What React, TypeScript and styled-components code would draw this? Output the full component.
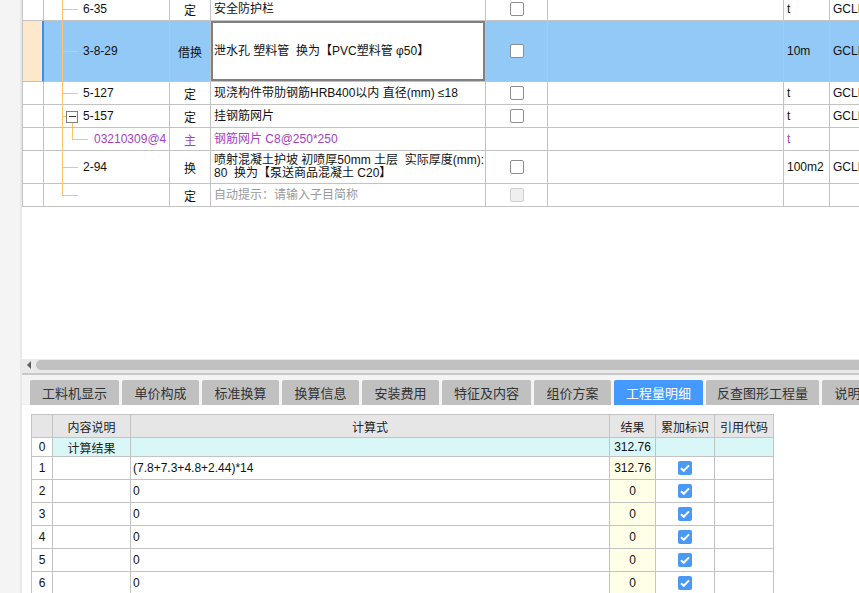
import React from "react";
import styled, { createGlobalStyle } from "styled-components";

const LINE = "#c3c3c3";
const TREE = "#ffc266";

const GlobalStyle = createGlobalStyle`
  *, *::before, *::after { box-sizing: border-box; }
  html, body { margin: 0; padding: 0; background: #fff; overflow: hidden; }
  body {
    font-family: "Liberation Sans", "Noto Sans CJK SC", sans-serif;
    font-size: 12px;
    color: #111;
  }
`;

const Page = styled.div`
  display: flex;
  width: 859px;
  height: 593px;
  overflow: hidden;
`;

const SideStrip = styled.div`
  flex: none;
  width: 22px;
  background: #f4f4f4;
  border-right: 2px solid #e8e8e8;
`;

const Main = styled.div`
  flex: 1;
  min-width: 0;
  display: flex;
  flex-direction: column;
  overflow: hidden;
`;

/* ---------- upper grid ---------- */

const TopArea = styled.div`
  flex: none;
  height: 359px;
  overflow: hidden;
  background: #fff;
`;

const Grid = styled.div`
  margin-top: -2px;
  width: max-content;
  border-left: 1px solid ${LINE};
`;

const Row = styled.div<{ $h: number; $sel?: boolean }>`
  display: grid;
  grid-template-columns: 21px 126px 41px 275px 62px 236px 46px 90px;
  height: ${(p) => p.$h}px;
  background: ${(p) => (p.$sel ? "#92c9f6" : "#fff")};
`;

type Tone = "normal" | "material" | "hint";
const toneColor = (t?: Tone) =>
  t === "material" ? "#a53fbf" : t === "hint" ? "#9a9a9a" : "#111";

const Cell = styled.div<{ $tone?: Tone }>`
  display: flex;
  align-items: center;
  overflow: hidden;
  white-space: pre;
  border-right: 1px solid ${LINE};
  border-bottom: 1px solid ${LINE};
  padding: 0 3px;
  color: ${(p) => toneColor(p.$tone)};
`;

const HeadCell = styled(Cell)<{ $sel?: boolean }>`
  background: ${(p) => (p.$sel ? "#fde8cb" : "#fff")};
  border-right: ${(p) => (p.$sel ? "2px solid #3c8ef0" : `1px solid ${LINE}`)};
`;

const CodeCell = styled(Cell)`
  padding: 0;
  align-items: stretch;
`;

const CodeText = styled.span`
  align-self: center;
`;

const TypeCell = styled(Cell)`
  justify-content: center;
  font-family: "Noto Sans CJK SC", sans-serif;
  font-weight: 400;
`;

const NameCell = styled(Cell)<{ $sel?: boolean }>`
  line-height: 13px;
  background: ${(p) => (p.$sel ? "#fff" : "transparent")};
  box-shadow: ${(p) => (p.$sel ? "inset 0 0 0 2px #808080" : "none")};
`;

const CenterCell = styled(Cell)`
  justify-content: center;
`;

const Box = styled.span<{ $disabled?: boolean }>`
  width: 14px;
  height: 14px;
  border-radius: 2px;
  border: 1px solid ${(p) => (p.$disabled ? "#cfcfcf" : "#8e8e8e")};
  background: ${(p) => (p.$disabled ? "#efefef" : "#fff")};
`;

const Guide = styled.svg`
  flex: none;
  display: block;
  shape-rendering: crispEdges;
`;

type TreeKind = "branch" | "last" | "open" | "child";

function TreeGuide({ kind, h }: { kind: TreeKind; h: number }) {
  const mid = Math.floor(h / 2) + 0.5;
  const w = kind === "child" ? 50 : 39;
  return (
    <Guide width={w} height={h}>
      <line x1={18.5} y1={0} x2={18.5} y2={kind === "last" ? mid : h} stroke={TREE} />
      {(kind === "branch" || kind === "last") && (
        <line x1={18.5} y1={mid} x2={34} y2={mid} stroke={TREE} />
      )}
      {kind === "open" && (
        <>
          <line x1={18.5} y1={mid} x2={22} y2={mid} stroke={TREE} />
          <line x1={28.5} y1={mid + 5.5} x2={28.5} y2={h} stroke={TREE} />
          <rect x={22.5} y={mid - 5.5} width={11} height={11} fill="#fff" stroke="#7f7f7f" />
          <line x1={25} y1={mid} x2={32} y2={mid} stroke="#333" />
        </>
      )}
      {kind === "child" && (
        <>
          <line x1={28.5} y1={0} x2={28.5} y2={mid} stroke={TREE} />
          <line x1={28.5} y1={mid} x2={44} y2={mid} stroke={TREE} />
        </>
      )}
    </Guide>
  );
}

type Item = {
  h: number;
  code: string;
  type: string;
  name: string;
  unit: string;
  cat: string;
  tree: TreeKind;
  check: "on" | "none" | "disabled";
  tone?: Tone;
  sel?: boolean;
};

const items: Item[] = [
  { h: 23, code: "6-35", type: "定", name: "安全防护栏", unit: "t", cat: "GCLMXHJ", tree: "branch", check: "on" },
  { h: 61, code: "3-8-29", type: "借换", name: "泄水孔 塑料管  换为【PVC塑料管 φ50】", unit: "10m", cat: "GCLMXHJ", tree: "branch", check: "on", sel: true },
  { h: 23, code: "5-127", type: "定", name: "现浇构件带肋钢筋HRB400以内 直径(mm) ≤18", unit: "t", cat: "GCLMXHJ", tree: "branch", check: "on" },
  { h: 23, code: "5-157", type: "定", name: "挂钢筋网片", unit: "t", cat: "GCLMXHJ", tree: "open", check: "on" },
  { h: 23, code: "03210309@4", type: "主", name: "钢筋网片 C8@250*250", unit: "t", cat: "", tree: "child", check: "none", tone: "material" },
  { h: 33, code: "2-94", type: "换", name: "喷射混凝土护坡 初喷厚50mm 土层  实际厚度(mm):\n80  换为【泵送商品混凝土 C20】", unit: "100m2", cat: "GCLMXHJ", tree: "branch", check: "on" },
  { h: 23, code: "", type: "定", name: "自动提示：请输入子目简称", unit: "", cat: "", tree: "last", check: "disabled", tone: "hint" },
];

/* ---------- scrollbar + tabs ---------- */

const HScroll = styled.div`
  flex: none;
  height: 16px;
  display: flex;
  align-items: center;
  padding: 0 0 2px 5px;
  background: #e9e9e9;
  border-bottom: 2px solid #c8c8c8;
`;

const ArrowLeft = styled.span`
  width: 0;
  height: 0;
  border-top: 4px solid transparent;
  border-bottom: 4px solid transparent;
  border-right: 4px solid #5e5e5e;
`;

const Thumb = styled.span`
  flex: 1;
  height: 10px;
  margin: 0 -10px 0 5px;
  border-radius: 5px;
  background: #c1c1c1;
`;

const TabStrip = styled.div`
  flex: none;
  height: 30px;
  display: flex;
  align-items: flex-end;
  gap: 3px;
  padding-left: 8px;
  background: #f4f4f4;
  overflow: hidden;
`;

const Tab = styled.div<{ $w: number; $active?: boolean }>`
  flex: none;
  width: ${(p) => p.$w}px;
  height: 25px;
  display: flex;
  align-items: center;
  justify-content: center;
  border-radius: 2px 2px 0 0;
  font-family: "Noto Sans CJK SC", sans-serif;
  font-size: 13px;
  color: ${(p) => (p.$active ? "#fff" : "#333")};
  background: ${(p) => (p.$active ? "#4499ff" : "#c0c0c0")};
`;

const tabs = [
  { label: "工料机显示", w: 89 },
  { label: "单价构成", w: 77 },
  { label: "标准换算", w: 77 },
  { label: "换算信息", w: 77 },
  { label: "安装费用", w: 77 },
  { label: "特征及内容", w: 89 },
  { label: "组价方案", w: 77 },
  { label: "工程量明细", w: 89, active: true },
  { label: "反查图形工程量", w: 113 },
  { label: "说明信息", w: 77 },
];

/* ---------- lower detail table ---------- */

const Bottom = styled.div`
  flex: 1;
  background: #fff;
  padding: 9px 0 0 9px;
  overflow: hidden;
`;

const DTable = styled.div`
  width: max-content;
  border-left: 1px solid ${LINE};
  border-top: 1px solid ${LINE};
`;

const DRow = styled.div<{ $h: number }>`
  display: grid;
  grid-template-columns: 21px 78px 479px 46px 59px 59px;
  height: ${(p) => p.$h}px;
`;

type Fill = "head" | "cyan" | "yellow" | "white";
const fills: Record<Fill, string> = {
  head: "#e6e6e6",
  cyan: "#d9f7f7",
  yellow: "#ffffe8",
  white: "#fff",
};

const DCell = styled.div<{ $fill?: Fill; $left?: boolean }>`
  display: flex;
  align-items: center;
  justify-content: ${(p) => (p.$left ? "flex-start" : "center")};
  padding: 0 2px;
  white-space: nowrap;
  overflow: hidden;
  border-right: 1px solid ${LINE};
  border-bottom: 1px solid ${LINE};
  background: ${(p) => fills[p.$fill || "white"]};
`;

const HeadLabel = styled.span`
  font-family: "Noto Sans CJK SC", sans-serif;
  font-size: 12px;
  color: #222;
`;

const Checked = styled.span`
  width: 14px;
  height: 14px;
  border-radius: 2px;
  background: #4a9af5;
  display: flex;
  align-items: center;
  justify-content: center;
`;

function CheckMark() {
  return (
    <Checked>
      <svg width="10" height="8" viewBox="0 0 10 8">
        <path d="M1 4.2 L3.8 6.8 L9 1.4" fill="none" stroke="#fff" strokeWidth="2" />
      </svg>
    </Checked>
  );
}

const details = [
  { n: "1", expr: "(7.8+7.3+4.8+2.44)*14", result: "312.76" },
  { n: "2", expr: "0", result: "0" },
  { n: "3", expr: "0", result: "0" },
  { n: "4", expr: "0", result: "0" },
  { n: "5", expr: "0", result: "0" },
  { n: "6", expr: "0", result: "0" },
];

export default function App() {
  return (
    <Page>
      <GlobalStyle />
      <SideStrip />
      <Main>
        <TopArea>
          <Grid>
            {items.map((it, i) => (
              <Row key={i} $h={it.h} $sel={it.sel}>
                <HeadCell $sel={it.sel} />
                <CodeCell $tone={it.tone}>
                  <TreeGuide kind={it.tree} h={it.h - 1} />
                  <CodeText>{it.code}</CodeText>
                </CodeCell>
                <TypeCell $tone={it.tone === "material" ? "material" : "normal"}>{it.type}</TypeCell>
                <NameCell $tone={it.tone} $sel={it.sel}>{it.name}</NameCell>
                <CenterCell>
                  {it.check !== "none" && <Box $disabled={it.check === "disabled"} />}
                </CenterCell>
                <Cell />
                <Cell $tone={it.tone}>{it.unit}</Cell>
                <Cell $tone={it.tone}>{it.cat}</Cell>
              </Row>
            ))}
          </Grid>
        </TopArea>

        <HScroll>
          <ArrowLeft />
          <Thumb />
        </HScroll>

        <TabStrip>
          {tabs.map((t) => (
            <Tab key={t.label} $w={t.w} $active={t.active}>
              {t.label}
            </Tab>
          ))}
        </TabStrip>

        <Bottom>
          <DTable>
            <DRow $h={23}>
              <DCell $fill="head" />
              <DCell $fill="head"><HeadLabel>内容说明</HeadLabel></DCell>
              <DCell $fill="head"><HeadLabel>计算式</HeadLabel></DCell>
              <DCell $fill="head"><HeadLabel>结果</HeadLabel></DCell>
              <DCell $fill="head"><HeadLabel>累加标识</HeadLabel></DCell>
              <DCell $fill="head"><HeadLabel>引用代码</HeadLabel></DCell>
            </DRow>
            <DRow $h={19}>
              <DCell>0</DCell>
              <DCell $fill="cyan"><HeadLabel>计算结果</HeadLabel></DCell>
              <DCell $fill="cyan" />
              <DCell $fill="cyan">312.76</DCell>
              <DCell $fill="cyan" />
              <DCell $fill="cyan" />
            </DRow>
            {details.map((d) => (
              <DRow key={d.n} $h={23}>
                <DCell>{d.n}</DCell>
                <DCell />
                <DCell $left>{d.expr}</DCell>
                <DCell $fill="yellow">{d.result}</DCell>
                <DCell><CheckMark /></DCell>
                <DCell />
              </DRow>
            ))}
          </DTable>
        </Bottom>
      </Main>
    </Page>
  );
}
